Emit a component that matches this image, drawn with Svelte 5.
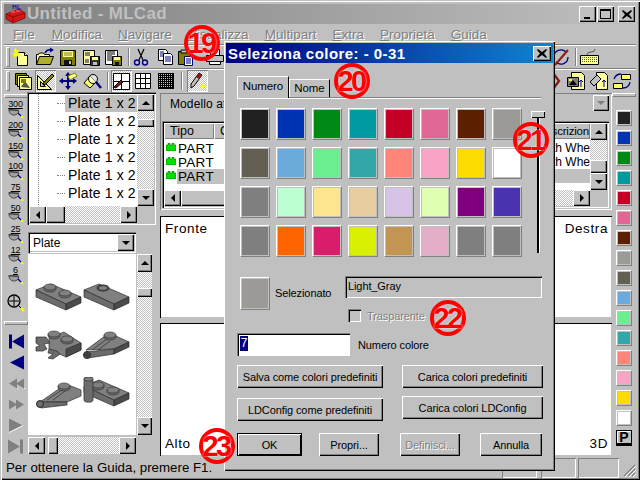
<script>
  const stroke = 'stroke="#000" stroke-width="1"';
  const icons = {
    new: `<path d="M5.5 5.5h7l3 3v10h-10z" fill="#ffff9a" ${stroke}/><path d="M12.5 5.5v3h3" fill="#fff" ${stroke}/><path d="M4 1l1 3 3-1-2 3 3 1-3 1 1 2-3-1-2 2 0-3-2-1 3-1-1-3z" fill="#ffff00"/>`,
    open: `<path d="M1.5 17.5v-10h2l1-1.5h4l1 1.5h5v2" fill="#ffff9a" ${stroke}/><path d="M1.5 17.5l3-8h14l-3 8z" fill="#b0b030" ${stroke}/><path d="M10 6q2-4 6-3" fill="none" stroke="#000080" stroke-width="1.4"/><path d="M15 0.5l4 2.5-4 2.5z" fill="#000080"/>`,
    save: `<path d="M2.5 3.5h15v15h-15z" fill="#808000" ${stroke}/><path d="M5 4h10v6h-10z" fill="#ffff9a"/><path d="M6 6h8M6 8h8" stroke="#808000"/><path d="M6 13h8v5h-8z" fill="#111"/><path d="M11 14h2v3h-2z" fill="#c0c0c0"/>`,
    saveas: `<path d="M2.5 3.5h11v14h-11z" fill="#ffff9a" ${stroke}/><path d="M4 5h5v4h-5zM4 12h4v4h-4z" fill="#808080"/><path d="M9.5 9.5h9v9h-9z" fill="#333" ${stroke}/><path d="M11 10h6v3h-6z" fill="#ffff9a"/><path d="M12 15h4v3h-4z" fill="#c0c0c0"/>`,
    saveall: `<path d="M2.5 3.500h12v14h-12z" fill="#fff" ${stroke}/><path d="M4 5h8M4 7h8M4 9h5M4 11h5M4 13h5" stroke="#000"/><path d="M9.5 9.5h9v9h-9z" fill="#808000" ${stroke}/><path d="M11 10h6v3h-6z" fill="#ffff9a"/><path d="M12 15h4v3h-4z" fill="#111"/>`,
    cut: `<path d="M7 2l5 11M13 2l-5 11" stroke="#000" stroke-width="1.2" fill="none"/><circle cx="6" cy="15.5" r="2.5" fill="none" stroke="#000080" stroke-width="1.4"/><circle cx="14" cy="15.5" r="2.5" fill="none" stroke="#000080" stroke-width="1.4"/>`,
    copy: `<path d="M3.5 2.5h7l2 2v9h-9z" fill="#fff" ${stroke}/><path d="M8.5 6.5h7l2 2v9h-9z" fill="#fff" ${stroke}/><path d="M5 5h4M5 7h3M5 9h3M10 10h6M10 12h6M10 14h6" stroke="#000080"/>`,
    paste: `<path d="M2.5 4.5h11v13h-11z" fill="#808000" ${stroke}/><path d="M5 3h6v3h-6z" fill="#c0c0c0" ${stroke}/><path d="M8.5 9.5h8v9h-8z" fill="#fff" stroke="#000080"/><path d="M10 12h5M10 14h5M10 16h5" stroke="#000080"/>`,
    print: `<path d="M5.5 2.5h9v6h-9z" fill="#fff" ${stroke}/><path d="M1.5 8.5h17v6h-17z" fill="#c0c0c0" ${stroke}/><path d="M4.5 14.5h11v3h-11z" fill="#fff" ${stroke}/>`,
    layers: `<path d="M2.5 2.5h11v11h-11z" fill="#808000" ${stroke}/><path d="M4.5 4.5h11v11h-11z" fill="#ffff9a" ${stroke}/><path d="M6.5 6.5h12v12h-12z" fill="#ffff9a" ${stroke}/><path d="M8 16l4-6 5 7z" fill="#555"/><path d="M8 8h5v4h-5z" fill="#808000"/>`,
    ruler: `<path d="M2.5 18.5v-14l14 14z" fill="#ffff9a" ${stroke}/><path d="M5.5 15.5v-5l5 5z" fill="#c0c0c0" ${stroke}/><path d="M9 11l8-8 2 2-8 8-3 1z" fill="#808000" ${stroke}/>`,
    move: `<path d="M10 1l3 4h-2v4h4v-2l4 3-4 3v-2h-4v4h2l-3 4-3-4h2v-4h-4v2l-4-3 4-3v2h4v-4h-2z" fill="#000080"/><path d="M10 5l7-3 2 3-7 4z" fill="#ffff9a" stroke="#808000"/>`,
    find: `<path d="M2 12l6-7 6 6-6 6z" fill="#ffff66" ${stroke}/><circle cx="11" cy="8" r="4.5" fill="#fff" fill-opacity=".55" ${stroke}/><path d="M14 11l5 6" stroke="#000080" stroke-width="2.4"/>`,
    grid1: `<path d="M2.5 2.5h16v16h-16zM10.5 2.5v16M2.5 10.5h16" fill="#fff" ${stroke}/><path d="M3 16l7-7 2 2-7 6z" fill="#8b1a1a" ${stroke}/>`,
    grid2: `<path d="M2.5 2.5h15v15h-15zM7.5 2.5v15M12.5 2.5v15M2.5 7.5h15M2.5 12.5h15" fill="#fff" ${stroke}/>`,
    grid3: `<path d="M2 2h16v16h-16z" fill="#000"/><path d="M3 3.5h14M3 5.5h14M3 7.5h14M3 9.5h14M3 11.5h14M3 13.5h14M3 15.5h14" stroke="#c0c0c0" stroke-dasharray="1 1"/>`,
    pen: `<path d="M12 2l3 2-8 11-3 2 0-4z" fill="#c0c0c0" ${stroke}/><path d="M12 2l3 2-3 4-3-2z" fill="#8b1a1a"/><path d="M16 11l1 3 3 1-3 1-1 3-1-3-3-1 3-1z" fill="#ffff00"/>`,
    nocircle: `<path d="M3 10a7 7 0 0 1 12-5" fill="none" stroke="#000080" stroke-width="1.3"/><path d="M17 10a7 7 0 0 1-12 5" fill="none" stroke="#000080" stroke-width="1.3"/><path d="M4 18L17 3" stroke="#8b1a1a" stroke-width="2"/>`,
    keyboard: `<path d="M1.5 8.5h18v9h-18z" fill="#ffff9a" ${stroke}/><path d="M3 10.5h15M3 12.5h15M3 14.5h15" stroke="#555" stroke-dasharray="1 1"/><path d="M8 8q0-3 4-3t4-3" fill="none" stroke="#555"/>`,
    xpart: `<path d="M10 2l6 8-6 8M2 2" fill="none" stroke="#8b1a1a" stroke-width="2.4"/>`,
    pic: `<path d="M5.5 1.5h10l3 3v14h-13z" fill="#ffff9a" ${stroke}/><path d="M1.5 6.5h11v9h-11z" fill="#808080" ${stroke}/><path d="M3 14l4-5 4 5z" fill="#000"/><path d="M3 8h3v2h-3z" fill="#ffff00"/><path d="M15 9v7M13 11l2-2 2 2" stroke="#000080" fill="none"/>`,
    erase: `<path d="M7.5 1.5h8l3 3v14h-11z" fill="#ffff9a" ${stroke}/><path d="M1 11l7-7 4 4-7 7z" fill="#c0c0c0" ${stroke}/><path d="M15 9v7M13 11l2-2 2 2" stroke="#000080" fill="none"/>`,
    convert: `<path d="M9.5 3.5h9v5h-9zM1.5 12.5h9v5h-9z" fill="#ffff66" ${stroke}/><path d="M2 8q2-5 7-5M18 11q-1 6-7 6" fill="none" stroke="#000080" stroke-width="1.3"/>`
  };
  const row1 = [['new', 1.5], ['open', 2], ['save', 2], ['saveas', 1.5], ['saveall', 1.5], 'sep', ['cut', 0], ['copy', 3], ['paste', 0], ['print', 8]];
  const row2 = [['layers', 2.5], ['ruler', 1, true], ['move', 2], ['find', 3], 'sep', ['grid1', 1, true], ['grid2', 1], ['grid3', 2], 'sep', ['pen', 3, true]];
  const menus = [['F', 'ile', 17], ['M', 'odifica', 16], ['N', 'avigare', 16], ['V', 'isualizza', 16], ['M', 'ultipart', 16], ['E', 'xtra', 16], ['P', 'roprietà', 16], ['G', 'uida', 0]];
  const zooms = ['300', '200', '150', '100', '75', '50', '25', '12', '6'];
  const barColors = ['#212121', '#0033b2', '#008a15', '#009aa3', '#c40026', '#df6695', '#5c2000', '#9c9a97', '#635f52', '#6babdc', '#6bee90', '#33a6a7', '#ff857a', '#f9a3c7', '#ffdc00', '#ffffff'];
  const colors = [...barColors, '#7f7f7f', '#bcffd1', '#fee690', '#e6ce9f', '#d7c3e6', '#e0ffb0', '#7f007f', '#4b33b0', '#7f7f7f', '#fe6400', '#d91d6b', '#d9f000', '#c29552', '#e4adc8', '#7f7f7f', '#7f7f7f'];

  const top = '#808080', side = '#6c6c6c', dark = '#4a4a4a', line = '#2c2c2c';
  const stud = (x, y) => `<path d="M${x - 6} ${y}v2a6 3 0 0 0 12 0v-2z" fill="${side}" stroke="${line}" stroke-width=".6"/><ellipse cx="${x}" cy="${y}" rx="6" ry="3" fill="${top}" stroke="${line}" stroke-width=".6"/>`;
  const plate = `<path d="M1 9l15-6 30 13-15 7z" fill="${top}" stroke="${line}" stroke-width=".7"/><path d="M1 9l30 14v6l-30-13z" fill="${side}" stroke="${line}" stroke-width=".7"/><path d="M31 23l15-7v6l-15 7z" fill="${dark}" stroke="${line}" stroke-width=".7"/>`;
  const bricks = [
    plate + stud(15, 6) + stud(30, 12),
    plate + `<ellipse cx="20" cy="7" rx="6" ry="3" fill="${dark}" stroke="${line}"/><ellipse cx="20" cy="7" rx="4" ry="1.8" fill="${top}"/>`,
    `<path d="M14 9l15-6 17 11v7l-15 7-17-8z" fill="${top}" stroke="${line}" stroke-width=".7"/><path d="M31 20l15-6v7l-15 7z" fill="${dark}" stroke="${line}" stroke-width=".7"/><path d="M1 8h10l4 6-6 1 3 5-4 2h-7v-4l4-1-4-3zM14 20l8 2 3 3-7 5-5-1 5-4-5-1z" fill="${side}" stroke="${line}" stroke-width=".7"/>` + stud(19, 5) + stud(32, 10),
    `<path d="M3 21l23-17 20 9-15 7z" fill="${top}" stroke="${line}" stroke-width=".7"/><path d="M3 23l28-3v5l-26 4z" fill="${side}" stroke="${line}" stroke-width=".7"/><path d="M31 20l15-7v5l-15 7z" fill="${dark}" stroke="${line}" stroke-width=".7"/><path d="M9 21l15-11M15 21l12-9" stroke="${line}" stroke-width=".7"/><circle cx="4" cy="26" r="3.500" fill="${dark}" stroke="${line}"/><path d="M4 23v6M1 26h6" stroke="${line}" stroke-width=".6"/>` + stud(27, 6),
    `<path d="M5 25l26-18 15 6v6l-14 6z" fill="${top}" stroke="${line}" stroke-width=".7"/><path d="M5 25l27 0v3l-26 3z" fill="${side}" stroke="${line}" stroke-width=".7"/><path d="M12 23l16-11M18 23l12-9" stroke="${line}" stroke-width=".7"/><circle cx="5" cy="27" r="3.5" fill="${side}" stroke="${line}"/>` + stud(29, 9),
    plate + stud(15, 8) + stud(30, 13) + `<path d="M1 2a4 2 0 0 1 9 0v21a4 2 0 0 1-9 0z" fill="${side}" stroke="${line}" stroke-width=".7"/><ellipse cx="5.5" cy="2" rx="4.5" ry="2" fill="${top}" stroke="${line}" stroke-width=".6"/>`
  ];
  const badges = [
    { n: '19', cls: 'b19' }, { n: '20', cls: 'b20' }, { n: '21', cls: 'b21' }, { n: '22', cls: 'b22' }, { n: '23', cls: 'b23' }
  ];
</script>

{#snippet bar(items)}
  <span class="grip"></span>
  {#each items as item}
    {#if item === 'sep'}
      <span class="tsep"></span>
    {:else}
      <span class="tool" class:on={item[2]} style="margin-left: {item[1]}px"><svg width="20" height="20" viewBox="0 0 20 20">{@html icons[item[0]]}</svg></span>
    {/if}
  {/each}
{/snippet}

{#snippet arrow(dir, cls = '')}
  <span class="sbtn {cls}"><i class={dir}></i></span>
{/snippet}

<div class="app">
  <header class="title">
    <svg class="logo" width="22" height="20" viewBox="0 0 22 20">
      <path d="M1 10l13-5 6 4v5l-12 5-7-4z" fill="#d01818" stroke="#700" stroke-width=".7"/>
      <path d="M8 18v-5l12-4M1 10l7 3" stroke="#700" fill="none" stroke-width=".7"/>
      <ellipse cx="8" cy="8" rx="2.5" ry="1.2" fill="#f04040"/><ellipse cx="13" cy="7" rx="2.5" ry="1.2" fill="#f04040"/>
      <path d="M8 1v4M8 1l1.5 2L11 1v4M13 1v4h3" stroke="#0000c0" fill="none" stroke-width=".8"/>
    </svg>
    <span class="title-text">Untitled - MLCad</span>
    <span class="wbtns">
      <span class="wbtn min"><i></i></span><span class="wbtn max"><i></i></span>
      <span class="wbtn close"><svg width="10" height="9" viewBox="0 0 10 9"><path d="M1 0l4 3 4-3 1 1-3 3.500 3 3.500-1 1-4-3-4 3-1-1 3-3.500-3-3.500z"/></svg></span>
    </span>
  </header>

  <nav class="menu">
    {#each menus as m}
      <span class="mi" style="margin-right: {m[2]}px"><u>{m[0]}</u>{m[1]}</span>
    {/each}
  </nav>

  <div class="tb">
    {@render bar(row1)}
    <span class="tb-right r1">
      <span class="tool"><svg width="20" height="20" viewBox="0 0 20 20">{@html icons.nocircle}</svg></span>
      <span class="tsep"></span>
      <span class="tool"><svg width="20" height="20" viewBox="0 0 20 20">{@html icons.keyboard}</svg></span>
    </span>
  </div>
  <div class="tb">
    {@render bar(row2)}
    <span class="tb-right r2">
      <span class="tool"><svg width="20" height="20" viewBox="0 0 20 20">{@html icons.xpart}</svg></span>
      <span class="tool"><svg width="20" height="20" viewBox="0 0 20 20">{@html icons.pic}</svg></span>
      <span class="tool"><svg width="20" height="20" viewBox="0 0 20 20">{@html icons.erase}</svg></span>
      <span class="tool"><svg width="20" height="20" viewBox="0 0 20 20">{@html icons.convert}</svg></span>
    </span>
  </div>

  <main class="main">
    <aside class="zoomcol">
      <span class="hgrip"></span>
      {#each zooms as z}
        <span class="zoomitem">
          <b>{z}</b>
          <svg width="17" height="9" viewBox="0 0 17 9"><path d="M1 0a5 5 0 0 0 10 2z" fill="#a0a0a0" stroke="#333" stroke-width=".8"/><path d="M1 1h10" stroke="#333"/><path d="M10 4l4 4" stroke="#000080" stroke-width="1.2"/><path d="M13 7l2 2" stroke="#ffff00" stroke-width="2"/></svg>
        </span>
      {/each}
      <svg class="fit" width="20" height="20" viewBox="0 0 20 20"><circle cx="8" cy="8" r="6" fill="#c0c0c0" stroke="#000" stroke-width="1.3"/><path d="M8 3v10M3 8h10" stroke="#000"/><path d="M12 12l4 4" stroke="#000"/><path d="M15 15l3 3" stroke="#ffff00" stroke-width="2.400"/></svg>
      <span class="hgrip mid"></span>
      <svg class="nav" width="20" height="20" viewBox="0 0 20 20"><path d="M3 3h3v14h-3zM18 3v14l-12-7z" fill="#000080"/></svg>
      <svg class="nav" width="20" height="20" viewBox="0 0 20 20"><path d="M18 3v14l-14-7z" fill="#000080"/></svg>
      <svg class="nav" width="20" height="20" viewBox="0 0 20 20"><path d="M11 5v10l-8-5zM18 5v10l-8-5z" fill="#808080"/><path d="M11 15h1M18 15h1" stroke="#fff"/></svg>
      <svg class="nav" width="20" height="20" viewBox="0 0 20 20"><path d="M3 5v10l8-5zM10 5v10l8-5z" fill="#808080"/></svg>
      <svg class="nav" width="20" height="20" viewBox="0 0 20 20"><path d="M3 3v14l14-7z" fill="#808080"/><path d="M3 17l14-7" stroke="#fff"/></svg>
      <svg class="nav" width="20" height="20" viewBox="0 0 20 20"><path d="M2 3v14l12-7zM14 3h3v14h-3z" fill="#808080"/></svg>
    </aside>

    <section class="treecol">
      <div class="tree sunken">
        <div class="tree-top">
          <div class="tree-rows">
            {#each [0, 1, 2, 3, 4, 5] as i}
              <div class="tree-row" class:sel={i === 0}><span>Plate 1 x 2</span></div>
            {/each}
          </div>
          <div class="sb-v">
            {@render arrow('up')}
            <span class="dither h8"></span>
            <span class="thumb h8"></span>
            <span class="dither grow"></span>
            {@render arrow('down')}
          </div>
        </div>
        <div class="sb-h treeh">
          {@render arrow('left')}
          <span class="thumb w19"></span>
          <span class="dither grow"></span>
          {@render arrow('right')}
          <span class="corner"></span>
        </div>
      </div>

      <div class="palette">
        <div class="combo sunken">
          <span>Plate</span>
          {@render arrow('down', 'combo-btn')}
        </div>
        <div class="pal-body">
          <div class="bricks">
            {#each bricks as b}
              <svg width="47" height="32" viewBox="0 0 47 32">{@html b}</svg>
            {/each}
          </div>
          <div class="sb-v tall">
            {@render arrow('up')}
            <span class="dither h16"></span>
            <span class="thumb h9"></span>
            <span class="dither grow"></span>
            {@render arrow('down')}
          </div>
        </div>
        <div class="sb-h palh">
          {@render arrow('left')}
          <span class="gap3"></span>
          <span class="thumb w10"></span>
          <span class="dither grow"></span>
          {@render arrow('right')}
        </div>
      </div>
    </section>

    <section class="center">
      <div class="model">
        <div class="model-head">
          <span>Modello attivo</span>
          <span class="combo-dis"><i class="down"></i></span>
        </div>
        <div class="list sunken">
          <div class="list-main">
            <div class="lhead">
              <span class="hcell tipo">Tipo</span>
              <span class="hcell rest">Colore</span>
              <span class="hcell desc">scrizion</span>
            </div>
            {#each [0, 1, 2] as i}
              <div class="lrow" class:sel={i === 2}>
                <svg width="10" height="8" viewBox="0 0 10 8"><path d="M0 2h2v-2h2v2h2v-2h2v2h2v6h-10z" fill="#00e000" stroke="#006000" stroke-width=".5"/></svg>
                <span class="ltext">PART</span>
                <span class="lend">{i < 2 ? 'th Whe' : ''}</span>
              </div>
            {/each}
            <div class="lblank"></div>
            <div class="sb-h listh">
              {@render arrow('left')}
              <span class="thumb grow"></span>
              <span class="dither w32"></span>
              {@render arrow('right')}
            </div>
          </div>
          <div class="sb-v listv">
            {@render arrow('up')}
            <span class="dither h20"></span>
            <span class="thumb h13"></span>
            {@render arrow('down')}
            <span class="corner grow"></span>
          </div>
        </div>
      </div>

      <div class="view v1">
        <span>Fronte</span><span>Destra</span>
      </div>
      <div class="view v2">
        <span>Alto</span><span>3D</span>
      </div>
    </section>

    <aside class="colorbar">
      <span class="hgrip wide"></span>
      {#each barColors as c}
        <span class="barcolor" style="background-color: {c}"></span>
      {/each}
      <span class="pbtn">P</span>
    </aside>
  </main>

  <footer class="status">
    <span class="pane first">Per ottenere la Guida, premere F1.</span>
    <span class="pane p2"></span>
    <span class="pane p3"></span>
    <span class="pane p4"></span>
    <svg class="sizegrip" width="13" height="13" viewBox="0 0 13 13"><path d="M12 1L1 12M12 5l-7 7M12 9l-3 3" stroke="#808080" stroke-width="1.200"/><path d="M13 2L2 13M13 6l-7 7M13 10l-3 3" stroke="#fff"/></svg>
  </footer>

  <div class="dialog">
    <div class="dlg-title">
      <span>Seleziona colore: - 0-31</span>
      <span class="wbtn dclose"><svg width="10" height="9" viewBox="0 0 10 9"><path d="M1 0l4 3 4-3 1 1-3 3.500 3 3.500-1 1-4-3-4 3-1-1 3-3.500-3-3.500z"/></svg></span>
    </div>

    <div class="tabs">
      <span class="tab active">Numero</span>
      <span class="tab">Nome</span>
    </div>

    <div class="pick">
      <div class="swatches">
        {#each colors as c}
          <span class="swatch" style="background-color: {c}"></span>
        {/each}
      </div>
      <div class="slider"><span class="track"></span><span class="sthumb"></span></div>
    </div>

    <div class="selected">
      <span class="swatch big" style="background-color: #9c9a97"></span>
      <span class="sel-label">Selezionato</span>
      <div class="sel-right">
        <div class="namebox">Light_Gray</div>
        <div class="check"><span class="box"></span><span class="disabled">Trasparente</span></div>
      </div>
    </div>

    <div class="numrow">
      <div class="numinput"><span>7</span></div>
      <span>Numero colore</span>
    </div>

    <div class="btn-grid">
      <div class="btn-col left">
        <span class="btn">Salva come colori predefiniti</span>
        <span class="btn">LDConfig come predefiniti</span>
      </div>
      <div class="btn-col right">
        <span class="btn">Carica colori predefiniti</span>
        <span class="btn">Carica colori LDConfig</span>
      </div>
    </div>

    <div class="actions">
      <span class="btn ok">OK</span>
      <span class="btn propri">Propri...</span>
      <span class="btn def disabled">Definisci...</span>
      <span class="btn cancel">Annulla</span>
    </div>
  </div>

  {#each badges as b}
    <span class="badge {b.cls}">{b.n}</span>
  {/each}
</div>

<style>
  :global(body) {
    margin: 0;
    background: #c0c0c0;
  }

  .app {
    position: relative;
    width: 640px;
    height: 480px;
    box-sizing: border-box;
    padding: 4px 4px 2px;
    display: flex;
    flex-direction: column;
    overflow: hidden;
    background: #c0c0c0;
    box-shadow: inset 1px 1px 0 #c0c0c0, inset 2px 2px 0 #fff, inset -1px -1px 0 #000, inset -2px -2px 0 #808080;
    font-family: "Liberation Sans", Arial, sans-serif;
    font-size: 11px;
    color: #000;
  }

  /* main window chrome */
  .title {
    height: 20px;
    flex: none;
    display: flex;
    align-items: center;
    background: linear-gradient(90deg, #808080, #c0c0c0);
  }
  .logo {
    margin-left: 1px;
    flex: none;
  }
  .title-text {
    font-size: 17px;
    font-weight: bold;
    letter-spacing: 0.3px;
    color: #c0c0c0;
  }
  .wbtns {
    margin-left: auto;
    display: flex;
    margin-right: 1px;
  }
  .wbtn {
    width: 17px;
    height: 16px;
    display: flex;
    align-items: center;
    justify-content: center;
    background: #c0c0c0;
    box-shadow: inset 1px 1px 0 #fff, inset -1px -1px 0 #000, inset -2px -2px 0 #808080;
  }
  .max {
    margin-left: 1px;
  }
  .close {
    margin-left: 4px;
  }
  .min i {
    width: 6px;
    height: 2px;
    background: #000;
    margin-top: 7px;
    margin-right: 2px;
  }
  .max i {
    width: 9px;
    height: 7px;
    border: 1px solid #000;
    border-top-width: 2px;
  }

  .menu {
    height: 20px;
    flex: none;
    display: flex;
    align-items: center;
    padding-left: 9px;
    font-size: 13.5px;
    color: #808080;
    text-shadow: 1px 1px 0 #fff;
  }

  .tb {
    height: 24px;
    flex: none;
    display: flex;
    align-items: center;
    box-sizing: border-box;
    border-top: 1px solid #808080;
    box-shadow: inset 0 1px 0 #fff;
    position: relative;
  }
  .grip {
    width: 2px;
    height: 18px;
    margin-left: 2px;
    border: 1px solid;
    border-color: #fff #808080 #808080 #fff;
    flex: none;
  }
  .tool {
    width: 21px;
    height: 22px;
    display: flex;
    align-items: center;
    justify-content: center;
    flex: none;
  }
  .tool.on {
    background: repeating-conic-gradient(#fff 0 25%, #c0c0c0 0 50%) 0 0 / 2px 2px;
    box-shadow: inset 1px 1px 0 #808080, inset -1px -1px 0 #fff;
  }
  .tsep {
    width: 0;
    height: 18px;
    margin-left: 4px;
    margin-right: 1px;
    border-left: 1px solid #808080;
    border-right: 1px solid #fff;
    flex: none;
  }
  .tb-right {
    margin-left: auto;
    display: flex;
    align-items: center;
  }
  .r1 {
    margin-right: 37px;
  }
  .r2 {
    margin-right: 4px;
    gap: 2px;
  }

  .main {
    flex: 1;
    min-height: 0;
    display: flex;
  }

  /* left strip with zoom and navigation */
  .zoomcol {
    width: 23px;
    flex: none;
    display: flex;
    flex-direction: column;
    align-items: center;
    padding-top: 6px;
    box-sizing: border-box;
  }
  .hgrip {
    display: block;
    width: 22px;
    height: 2px;
    border: 1px solid;
    border-color: #fff #808080 #808080 #fff;
    box-sizing: content-box;
    flex: none;
  }
  .zoomcol > .hgrip:first-child {
    margin-top: -4px;
    margin-bottom: 2px;
  }
  .hgrip.mid {
    margin: 8px 0 6px;
  }
  .zoomitem {
    height: 20.800px;
    flex: none;
    display: flex;
    flex-direction: column;
    align-items: center;
  }
  .zoomitem b {
    font-weight: normal;
    font-size: 9px;
    line-height: 9px;
    letter-spacing: -0.2px;
    text-decoration: underline;
  }
  .zoomitem svg {
    display: block;
    margin-left: 2px;
  }
  .fit {
    margin-top: 6px;
    flex: none;
  }
  .nav {
    height: 21px;
    flex: none;
  }

  /* part tree and palette */
  .treecol {
    width: 129px;
    flex: none;
    display: flex;
    flex-direction: column;
    margin-right: 4px;
  }
  .sunken {
    box-sizing: border-box;
    box-shadow: inset 1px 1px 0 #808080, inset 2px 2px 0 #000, inset -1px -1px 0 #fff, inset -2px -2px 0 #c0c0c0;
    padding: 2px;
  }
  .tree {
    height: 133px;
    flex: none;
    display: flex;
    flex-direction: column;
  }
  .tree-top {
    flex: 1;
    min-height: 0;
    display: flex;
  }
  .tree-rows {
    flex: 1;
    background: #fff;
    background-image:
      repeating-linear-gradient(180deg, #808080 0 1px, transparent 1px 2px),
      linear-gradient(90deg, #fff, #fff);
    background-size: 1px 100%, 100% 100%;
    background-position: 9px 0, 0 0;
    background-repeat: no-repeat;
    overflow: hidden;
    font-size: 14px;
    letter-spacing: 0.15px;
  }
  .tree-row {
    height: 18px;
    display: flex;
    align-items: center;
    padding-left: 36px;
    position: relative;
    white-space: nowrap;
  }
  .tree-row::before {
    content: '';
    position: absolute;
    left: 28px;
    top: 9px;
    width: 8px;
    border-top: 1px dotted #808080;
  }
  .tree-row span {
    padding: 0 0 0 3px;
    flex: 1;
    line-height: 17px;
  }
  .tree-row.sel span {
    background: #c0c0c0;
  }
  .sb-v {
    width: 17px;
    flex: none;
    display: flex;
    flex-direction: column;
  }
  .sb-h {
    height: 17px;
    flex: none;
    display: flex;
  }
  .sbtn {
    width: 17px;
    height: 17px;
    flex: none;
    display: flex;
    align-items: center;
    justify-content: center;
    background: #c0c0c0;
    box-shadow: inset 1px 1px 0 #fff, inset -1px -1px 0 #000, inset -2px -2px 0 #808080;
  }
  .sbtn i,
  .combo-dis i {
    width: 0;
    height: 0;
    border: 4px solid transparent;
  }
  .up {
    border-bottom-color: #000 !important;
    border-top-width: 0 !important;
  }
  .down {
    border-top-color: #000 !important;
    border-bottom-width: 0 !important;
  }
  .left {
    border-right-color: #000 !important;
    border-left-width: 0 !important;
  }
  .right {
    border-left-color: #000 !important;
    border-right-width: 0 !important;
  }
  .dither {
    display: block;
    background: repeating-conic-gradient(#fff 0 25%, #c0c0c0 0 50%) 0 0 / 2px 2px;
    flex: none;
  }
  .thumb {
    display: block;
    background: #c0c0c0;
    box-shadow: inset 1px 1px 0 #fff, inset -1px -1px 0 #000, inset -2px -2px 0 #808080;
    flex: none;
  }
  .grow {
    flex: 1;
  }
  .h8 { height: 8px; }
  .h9 { height: 9px; }
  .h13 { height: 13px; }
  .h16 { height: 16px; }
  .h20 { height: 20px; }
  .w10 { width: 10px; }
  .w19 { width: 19px; }
  .w32 { width: 32px; }
  .gap3 { width: 3px; background: #c0c0c0; flex: none; }
  .corner {
    display: block;
    width: 17px;
    flex: none;
    background: #c0c0c0;
  }

  .palette {
    flex: 1;
    min-height: 0;
    display: flex;
    flex-direction: column;
    padding: 4px 2px 3px 1px;
    box-sizing: border-box;
    margin-top: 3px;
  }
  .combo {
    height: 21px;
    width: 108px;
    flex: none;
    display: flex;
    align-items: center;
    justify-content: space-between;
    background: #fff;
    padding: 2px 2px 2px 5px;
    font-size: 12px;
  }
  .combo-btn {
    height: 17px;
  }
  .pal-body {
    flex: 1;
    min-height: 0;
    display: flex;
    margin-top: 1px;
  }
  .bricks {
    width: 108px;
    flex: none;
    box-sizing: border-box;
    background: #fff;
    padding: 27px 0 0 7px;
    display: grid;
    grid-template-columns: 47px 47px;
    grid-auto-rows: 32px;
    row-gap: 16px;
    column-gap: 1px;
  }
  .bricks svg {
    display: block;
  }
  .sb-v.tall {
    margin-left: 1px;
    width: 15px;
  }
  .sb-v.tall .sbtn {
    width: 15px;
    height: 18px;
  }
  .palh {
    width: 108px;
    margin-top: 2px;
  }
  .palh .dither {
    flex: 1;
  }

  /* model list and views */
  .center {
    width: 452px;
    flex: none;
    display: flex;
    flex-direction: column;
  }
  .model {
    height: 117px;
    flex: none;
    margin-top: 1px;
    padding: 2px;
    box-sizing: border-box;
    box-shadow: inset 1px 1px 0 #808080, inset -1px -1px 0 #fff;
    display: flex;
    flex-direction: column;
  }
  .model-head {
    height: 26px;
    flex: none;
    display: flex;
    align-items: flex-start;
    justify-content: space-between;
    padding-left: 8px;
    font-size: 12px;
    letter-spacing: 0.1px;
    line-height: 18px;
  }
  .combo-dis {
    width: 16px;
    height: 16px;
    margin-right: 1px;
    display: flex;
    align-items: center;
    justify-content: center;
    box-shadow: inset 1px 1px 0 #fff, inset -1px -1px 0 #000, inset -2px -2px 0 #808080;
  }
  .combo-dis i {
    border-top-color: #808080 !important;
  }
  .list {
    flex: 1;
    min-height: 0;
    width: 447px;
    display: flex;
  }
  .list-main {
    flex: 1;
    min-width: 0;
    display: flex;
    flex-direction: column;
    background: #fff;
  }
  .lhead {
    height: 16px;
    flex: none;
    display: flex;
    background: #c0c0c0;
    font-size: 12.500px;
  }
  .hcell {
    box-sizing: border-box;
    box-shadow: inset 1px 1px 0 #fff, inset -1px -1px 0 #808080;
    padding-left: 6px;
    line-height: 16px;
    white-space: nowrap;
    overflow: hidden;
  }
  .tipo { width: 50px; }
  .rest { width: 320px; }
  .desc {
    flex: 1;
    padding: 0 1px 0 0;
    text-align: right;
    font-size: 11.500px;
    letter-spacing: -0.2px;
  }
  .lhead,
  .lrow {
    white-space: nowrap;
  }
  .lrow {
    height: 14px;
    flex: none;
    display: flex;
    align-items: center;
    font-size: 13.500px;
    position: relative;
  }
  .lrow:nth-child(2) {
    margin-top: 2px;
  }
  .lrow svg {
    margin: -3px 1px 0 2px;
    flex: none;
  }
  .ltext {
    flex: 1;
    padding-left: 1px;
    letter-spacing: 0.3px;
  }
  .lrow.sel .ltext,
  .lrow.sel .lend {
    background: #c0c0c0;
  }
  .lend {
    width: 38px;
    flex: none;
    align-self: stretch;
    font-size: 12px;
    line-height: 14px;
  }
  .lblank {
    flex: 1;
  }
  .listh {
    height: 16px;
  }
  .listh .sbtn {
    height: 16px;
  }
  .listv .corner {
    width: 17px;
  }

  .view {
    flex: none;
    box-sizing: border-box;
    background: #fff;
    border-top: 1px solid #000;
    border-left: 1px solid #000;
    display: flex;
    justify-content: space-between;
    padding: 4px 4px 4px 4px;
    font-size: 13.500px;
    letter-spacing: 0.6px;
    box-shadow: inset -1px -1px 0 #c0c0c0;
  }
  .v1 {
    height: 102px;
    margin-top: 6px;
  }
  .v2 {
    height: 133px;
    margin-top: 5px;
    align-items: flex-end;
    padding-bottom: 5px;
  }

  .colorbar {
    width: 24px;
    flex: none;
    display: flex;
    flex-direction: column;
    align-items: center;
    padding-top: 1px;
    box-sizing: border-box;
  }
  .hgrip.wide {
    margin-bottom: 13px;
  }
  .barcolor {
    width: 16px;
    height: 16px;
    flex: none;
    margin-bottom: 4px;
    box-sizing: border-box;
    border: 1px solid;
    border-color: #fff #808080 #808080 #fff;
    padding: 1px;
    background-clip: content-box;
  }
  .pbtn {
    width: 16px;
    height: 16px;
    flex: none;
    box-sizing: border-box;
    border: 1px solid #000;
    border-bottom-width: 3px;
    box-shadow: inset 1px 1px 0 #fff;
    font-size: 14px;
    font-weight: bold;
    line-height: 12px;
    text-align: center;
  }

  .status {
    height: 20px;
    flex: none;
    margin-top: 1px;
    display: flex;
    align-items: stretch;
    position: relative;
  }
  .pane {
    box-sizing: border-box;
    box-shadow: inset 1px 1px 0 #808080, inset -1px -1px 0 #fff;
    flex: none;
  }
  .first {
    width: 494px;
    padding-left: 2px;
    font-size: 13.300px;
    line-height: 20px;
    box-shadow: none;
    white-space: nowrap;
  }
  .p2 { width: 35px; margin-left: 4px; }
  .p3 { width: 35px; margin-left: 4px; }
  .p4 { width: 41px; margin-left: 2px; }
  .sizegrip {
    position: absolute;
    right: 0;
    bottom: 1px;
  }

  /* colour dialog */
  .dialog {
    position: absolute;
    left: 224px;
    top: 41px;
    width: 331px;
    height: 430px;
    box-sizing: border-box;
    padding: 2px;
    background: #c0c0c0;
    box-shadow: inset 1px 1px 0 #fff, inset -1px -1px 0 #000, inset -2px -2px 0 #808080;
    display: flex;
    flex-direction: column;
    font-size: 11px;
    letter-spacing: -0.1px;
  }
  .dlg-title {
    height: 20px;
    flex: none;
    display: flex;
    align-items: center;
    justify-content: space-between;
    padding-left: 2px;
    background: linear-gradient(90deg, #000080, #1084d0);
    color: #fff;
    font-size: 15px;
    font-weight: bold;
    letter-spacing: 0.45px;
    white-space: nowrap;
  }
  .dclose {
    width: 18px;
    height: 15px;
    margin-right: 2px;
    letter-spacing: 0;
  }
  .tabs {
    height: 21px;
    flex: none;
    margin: 13px 12px 0 11px;
    display: flex;
    align-items: flex-end;
    border-bottom: 1px solid #808080;
    box-shadow: 0 1px 0 #fff;
    font-size: 11.500px;
  }
  .tab {
    box-sizing: border-box;
    height: 18px;
    width: 41px;
    text-align: center;
    line-height: 17px;
    border: 1px solid;
    border-color: #fff #000 transparent #fff;
    border-bottom: none;
  }
  .tab.active {
    width: 52px;
    height: 22px;
    line-height: 18px;
    margin-bottom: -1px;
    background: #c0c0c0;
    border-right-color: #000;
    position: relative;
  }
  .pick {
    flex: none;
    display: flex;
    margin: 10px 0 0 14px;
    height: 150px;
  }
  .swatches {
    display: grid;
    grid-template-columns: repeat(8, 30px);
    grid-auto-rows: 32px;
    column-gap: 6px;
    row-gap: 7px;
  }
  .swatch {
    display: block;
    box-sizing: border-box;
    border: 1px solid;
    border-color: #fff #808080 #808080 #fff;
    padding: 1px;
    background-clip: content-box;
  }
  .slider {
    position: relative;
    width: 14px;
    margin-left: 9px;
  }
  .track {
    position: absolute;
    left: 6px;
    top: 8px;
    height: 137px;
    width: 2px;
    background: #000;
    border-right: 1px solid #fff;
    box-sizing: content-box;
  }
  .sthumb {
    position: absolute;
    left: 0;
    top: 3px;
    width: 14px;
    height: 7px;
    background: #c0c0c0;
    box-shadow: inset 1px 1px 0 #fff, inset -1px -1px 0 #000;
  }
  .selected {
    flex: none;
    display: flex;
    margin: 18px 0 0 14px;
    height: 47px;
  }
  .swatch.big {
    width: 30px;
    height: 33px;
    flex: none;
    margin-top: 1px;
  }
  .sel-label {
    margin: 11px 0 0 5px;
    width: 70px;
    flex: none;
  }
  .sel-right {
    flex: 1;
    display: flex;
    flex-direction: column;
  }
  .namebox {
    width: 197px;
    height: 22px;
    box-sizing: border-box;
    padding: 3px 3px;
    line-height: 14px;
    box-shadow: inset 1px 1px 0 #808080, inset 2px 2px 0 #000, inset -1px -1px 0 #fff;
  }
  .check {
    display: flex;
    align-items: center;
    margin: 11px 0 0 3px;
    height: 13px;
  }
  .box {
    width: 13px;
    height: 13px;
    box-sizing: border-box;
    margin-right: 6px;
    box-shadow: inset 1px 1px 0 #808080, inset 2px 2px 0 #000, inset -1px -1px 0 #fff;
  }
  .disabled {
    color: #808080;
    text-shadow: 1px 1px 0 #fff;
  }
  .numrow {
    flex: none;
    display: flex;
    align-items: center;
    margin: 10px 0 0 11px;
    height: 23px;
  }
  .numinput {
    width: 113px;
    height: 23px;
    box-sizing: border-box;
    margin-right: 8px;
    padding: 3px 0 0 3px;
    background: #fff;
    box-shadow: inset 1px 1px 0 #808080, inset 2px 2px 0 #000, inset -1px -1px 0 #fff;
    font-size: 12px;
    line-height: 15px;
  }
  .numinput span {
    display: inline-block;
    background: #000080;
    color: #fff;
    width: 8px;
    text-align: center;
  }
  .btn-grid {
    flex: none;
    display: flex;
    margin: 9px 0 0 11px;
    height: 55px;
  }
  .btn-col {
    display: flex;
    flex-direction: column;
  }
  .btn-col.left {
    width: 146px;
    gap: 10px;
  }
  .btn-col.right {
    width: 141px;
    margin-left: 19px;
    gap: 8px;
  }
  .btn {
    display: flex;
    align-items: center;
    justify-content: center;
    flex: none;
    height: 23px;
    box-sizing: border-box;
    background: #c0c0c0;
    box-shadow: inset 1px 1px 0 #fff, inset -1px -1px 0 #000, inset -2px -2px 0 #808080;
    white-space: nowrap;
  }
  .actions {
    flex: none;
    display: flex;
    margin: 13px 0 0 11px;
  }
  .ok {
    width: 65px;
    margin-right: 17px;
    box-shadow: 0 0 0 1px #000 inset, inset 2px 2px 0 #fff, inset -2px -2px 0 #000;
  }
  .propri {
    width: 60px;
    margin-right: 21px;
  }
  .def {
    width: 60px;
    margin-right: 20px;
  }
  .cancel {
    width: 62px;
  }

  /* numbered callouts */
  .badge {
    position: absolute;
    width: 36px;
    height: 36px;
    box-sizing: border-box;
    border: 4px solid #f00;
    border-radius: 50%;
    display: flex;
    align-items: center;
    justify-content: center;
    color: #f00;
    font-size: 29px;
    font-weight: bold;
    letter-spacing: -2.500px;
    line-height: 1;
    text-shadow: 0 0 2px #fff;
    padding-right: 2px;
  }
  .b19 { left: 184px; top: 25px; }
  .b20 { left: 334px; top: 63px; }
  .b21 { left: 513px; top: 122px; }
  .b22 { left: 430px; top: 300px; }
  .b23 { left: 199px; top: 428px; }
</style>
